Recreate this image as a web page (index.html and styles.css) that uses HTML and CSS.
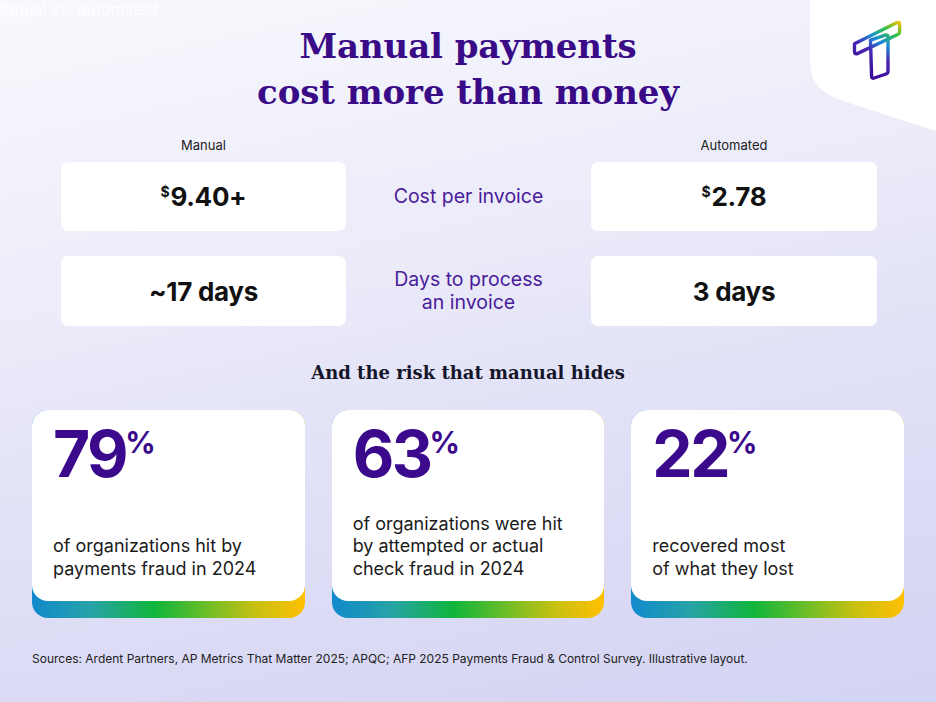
FILE: index.html
```html
<!DOCTYPE html>
<html lang="en">
<head>
<meta charset="utf-8">
<title>Manual payments cost more than money</title>
<link rel="stylesheet" href="styles.css">
</head>
<body>
<div class="page">
  <div class="corner" aria-hidden="true">
    <svg width="126" height="140" viewBox="0 0 126 140">
      <defs>
        <linearGradient id="lg" gradientUnits="userSpaceOnUse" x1="58" y1="78" x2="92" y2="22">
          <stop offset="0" stop-color="#3a0a96"/>
          <stop offset="0.38" stop-color="#4726b4"/>
          <stop offset="0.58" stop-color="#1b8ed6"/>
          <stop offset="0.78" stop-color="#2fc046"/>
          <stop offset="1" stop-color="#ffc400"/>
        </linearGradient>
      </defs>
      <path d="M0 0 H126 V131 L36 102 C6 92 0 80 0 58 Z" fill="#ffffff"/>
      <g fill="none" stroke="url(#lg)" stroke-width="3.4" stroke-linejoin="round">
        <path d="M44.5 43.8 L86.5 22.8 Q89.6 21.4 89.6 24.6 L89.6 31.4 Q89.6 33.6 87.6 34.5 L47.8 53.4 Q44.5 54.8 44.5 51.4 Z"/>
        <path d="M60.5 40.2 L75.2 35.2 Q78 34.3 78 37.1 L78 71.2 Q78 73.3 76 74 L64.2 78 Q61.6 78.8 61.6 76.2 Z"/>
      </g>
    </svg>
  </div>

  <div class="kicker">Manual vs. automated</div>
  <h1 class="title">Manual payments<br>cost more than money</h1>

  <section class="compare">
    <div class="col-label">Manual</div>
    <div></div>
    <div class="col-label">Automated</div>

    <div class="val-box"><span class="val"><span class="cur">$</span>9.40+</span></div>
    <div class="metric">Cost per invoice</div>
    <div class="val-box"><span class="val"><span class="cur">$</span>2.78</span></div>

    <div class="val-box second"><span class="val">~17 days</span></div>
    <div class="metric second">Days to process<br>an invoice</div>
    <div class="val-box second"><span class="val">3 days</span></div>
  </section>

  <h2 class="risk-title">And the risk that manual hides</h2>

  <section class="stats">
    <div class="stat">
      <div class="stat-body">
        <div class="big">79<span class="pct">%</span></div>
        <p class="desc">of organizations hit by<br>payments fraud in 2024</p>
      </div>
    </div>
    <div class="stat">
      <div class="stat-body">
        <div class="big">63<span class="pct">%</span></div>
        <p class="desc">of organizations were hit<br>by attempted or actual<br>check fraud in 2024</p>
      </div>
    </div>
    <div class="stat">
      <div class="stat-body">
        <div class="big">22<span class="pct">%</span></div>
        <p class="desc">recovered most<br>of what they lost</p>
      </div>
    </div>
  </section>

  <p class="sources">Sources: Ardent Partners, AP Metrics That Matter 2025; APQC; AFP 2025 Payments Fraud &amp; Control Survey. Illustrative layout.</p>
</div>
</body>
</html>
```
FILE: styles.css
```css
html, body {
  margin: 0;
  padding: 0;
}

body {
  width: 936px;
  height: 702px;
  overflow: hidden;
}

.page {
  position: relative;
  width: 936px;
  height: 702px;
  overflow: hidden;
  box-sizing: border-box;
  background: linear-gradient(168deg, #f8f8fd 0%, #eeeefa 30%, #e0e0f7 62%, #d3d3f3 100%);
  font-family: Inter, "Noto Sans", "Liberation Sans", sans-serif;
  color: #1b1b1b;
}

.corner {
  position: absolute;
  top: 0;
  right: 0;
  width: 126px;
  height: 140px;
}

.corner svg {
  display: block;
}

.kicker {
  margin-left: -9px;
  height: 19px;
  font-size: 16px;
  line-height: 19px;
  color: #ffffff;
  white-space: nowrap;
}

.title {
  margin: 4px 0 0;
  text-align: center;
  font-family: "DejaVu Serif", "Liberation Serif", serif;
  font-weight: 700;
  font-size: 34px;
  line-height: 46px;
  color: #3a0b87;
  letter-spacing: -0.1px;
}

.compare {
  display: grid;
  grid-template-columns: 285px 1fr 286px;
  grid-template-rows: 16px 69px 86px;
  row-gap: 9px;
  margin: 22px 59px 0 61px;
}

.col-label {
  text-align: center;
  font-size: 13px;
  line-height: 16px;
  color: #222222;
}

.val-box {
  background: #ffffff;
  border-radius: 7px;
  display: flex;
  align-items: center;
  justify-content: center;
}

.second {
  margin-top: 16px;
}

.val {
  font-size: 26px;
  font-weight: 700;
  color: #111111;
  letter-spacing: -0.3px;
}

.cur {
  font-size: 14px;
  vertical-align: 9px;
  margin-right: 1px;
}

.metric {
  display: flex;
  align-items: center;
  justify-content: center;
  text-align: center;
  font-size: 19.5px;
  line-height: 23px;
  color: #4a1b9b;
}

.risk-title {
  margin: 35px 0 0;
  text-align: center;
  font-family: "DejaVu Serif", "Liberation Serif", serif;
  font-weight: 700;
  font-size: 18px;
  line-height: 24px;
  color: #16162a;
}

.stats {
  display: grid;
  grid-template-columns: repeat(3, 1fr);
  column-gap: 27px;
  margin: 25px 32px 0;
}

.stat {
  border-radius: 16px;
  padding-bottom: 17px;
  background: linear-gradient(90deg, #1189cd 0%, #27a3a6 22%, #10b53b 45%, #62bd2a 62%, #c8c012 82%, #ffc000 100%);
}

.stat-body {
  box-sizing: border-box;
  height: 191px;
  background: #ffffff;
  border-radius: 16px;
  padding: 12px 20px 21px 21px;
  display: flex;
  flex-direction: column;
  justify-content: space-between;
}

.big {
  display: flex;
  align-items: flex-start;
  font-size: 64px;
  line-height: 64px;
  font-weight: 700;
  color: #3b0a8c;
  letter-spacing: -2.5px;
}

.pct {
  font-size: 30px;
  line-height: 30px;
  margin-top: 5px;
  margin-left: -1px;
  letter-spacing: 0;
}

.desc {
  margin: 0;
  font-size: 18px;
  line-height: 22.5px;
  color: #1b1b1b;
}

.sources {
  margin: 33px 0 0 32px;
  font-size: 12px;
  line-height: 16px;
  color: #222222;
}
```
